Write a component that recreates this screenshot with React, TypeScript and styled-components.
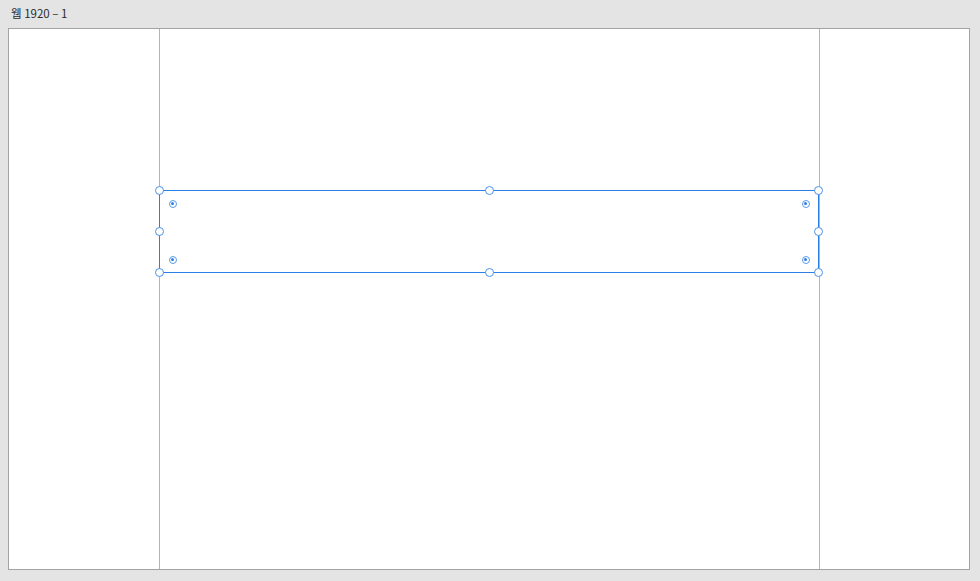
import React from "react";
import styled, { createGlobalStyle } from "styled-components";

const Global = createGlobalStyle`
  html, body { margin: 0; padding: 0; background: #e4e4e4; }
  body { font-family: "Noto Sans", "Noto Sans CJK KR", sans-serif; }
`;

const Page = styled.div`
  width: 980px;
  height: 581px;
  display: flex;
  flex-direction: column;
  background: #e4e4e4;
  box-sizing: border-box;
  padding: 0 10px 11px 8px;
`;

const Title = styled.div`
  height: 28px;
  display: flex;
  align-items: center;
  padding-left: 3px;
  padding-bottom: 2px;
  box-sizing: border-box;
  font-size: 11.5px;
  color: #2b2b2b;
  font-family: "Noto Sans CJK KR", "Noto Sans", sans-serif;
`;

const Artboard = styled.div`
  position: relative;
  flex: 1;
  background: #ffffff;
  border: 1px solid #a3a3a3;
  box-sizing: border-box;
  overflow: hidden;
`;

const Guide = styled.div<{ $x: number }>`
  position: absolute;
  top: 0;
  bottom: 0;
  left: ${(p) => p.$x}px;
  width: 1px;
  background: #3fe3f3;
`;

const Selection = styled.div`
  position: absolute;
  left: 150px;
  top: 161px;
  width: 660px;
  height: 83px;
  border: 1px solid #2a7fe6;
  box-sizing: border-box;
`;

const Handle = styled.div<{ $x: number; $y: number }>`
  position: absolute;
  left: ${(p) => p.$x - 4.5}px;
  top: ${(p) => p.$y - 4.5}px;
  width: 9px;
  height: 9px;
  border-radius: 50%;
  background: #ffffff;
  border: 1px solid #4b93ea;
  box-sizing: border-box;
`;

const Radius = styled.div<{ $x: number; $y: number }>`
  position: absolute;
  left: ${(p) => p.$x - 4}px;
  top: ${(p) => p.$y - 4}px;
  width: 8px;
  height: 8px;
  border-radius: 50%;
  background: #ffffff;
  border: 1px solid #5b9be8;
  box-sizing: border-box;
  display: flex;
  align-items: center;
  justify-content: center;
  &::after {
    content: "";
    width: 3px;
    height: 3px;
    border-radius: 50%;
    background: #2a7fe6;
  }
`;

// artboard inner origin is at page (9, 29)
const OX = 9;
const OY = 29;

const handles = [
  [159.5, 190.5],
  [489, 190.5],
  [818.5, 190.5],
  [159.5, 231],
  [818.5, 231],
  [159.5, 272],
  [489, 272],
  [818.5, 272],
];

const radii = [
  [172.5, 203.5],
  [805.5, 203.5],
  [172.5, 259.5],
  [805.5, 259.5],
];

export default function App() {
  return (
    <>
      <Global />
      <Page>
        <Title>웹 1920 – 1</Title>
        <Artboard>
          <Guide $x={159 - OX} />
          <Guide $x={819 - OX} />
          <Selection />
          {handles.map(([x, y], i) => (
            <Handle key={i} $x={x - OX} $y={y - OY} />
          ))}
          {radii.map(([x, y], i) => (
            <Radius key={i} $x={x - OX} $y={y - OY} />
          ))}
        </Artboard>
      </Page>
    </>
  );
}
